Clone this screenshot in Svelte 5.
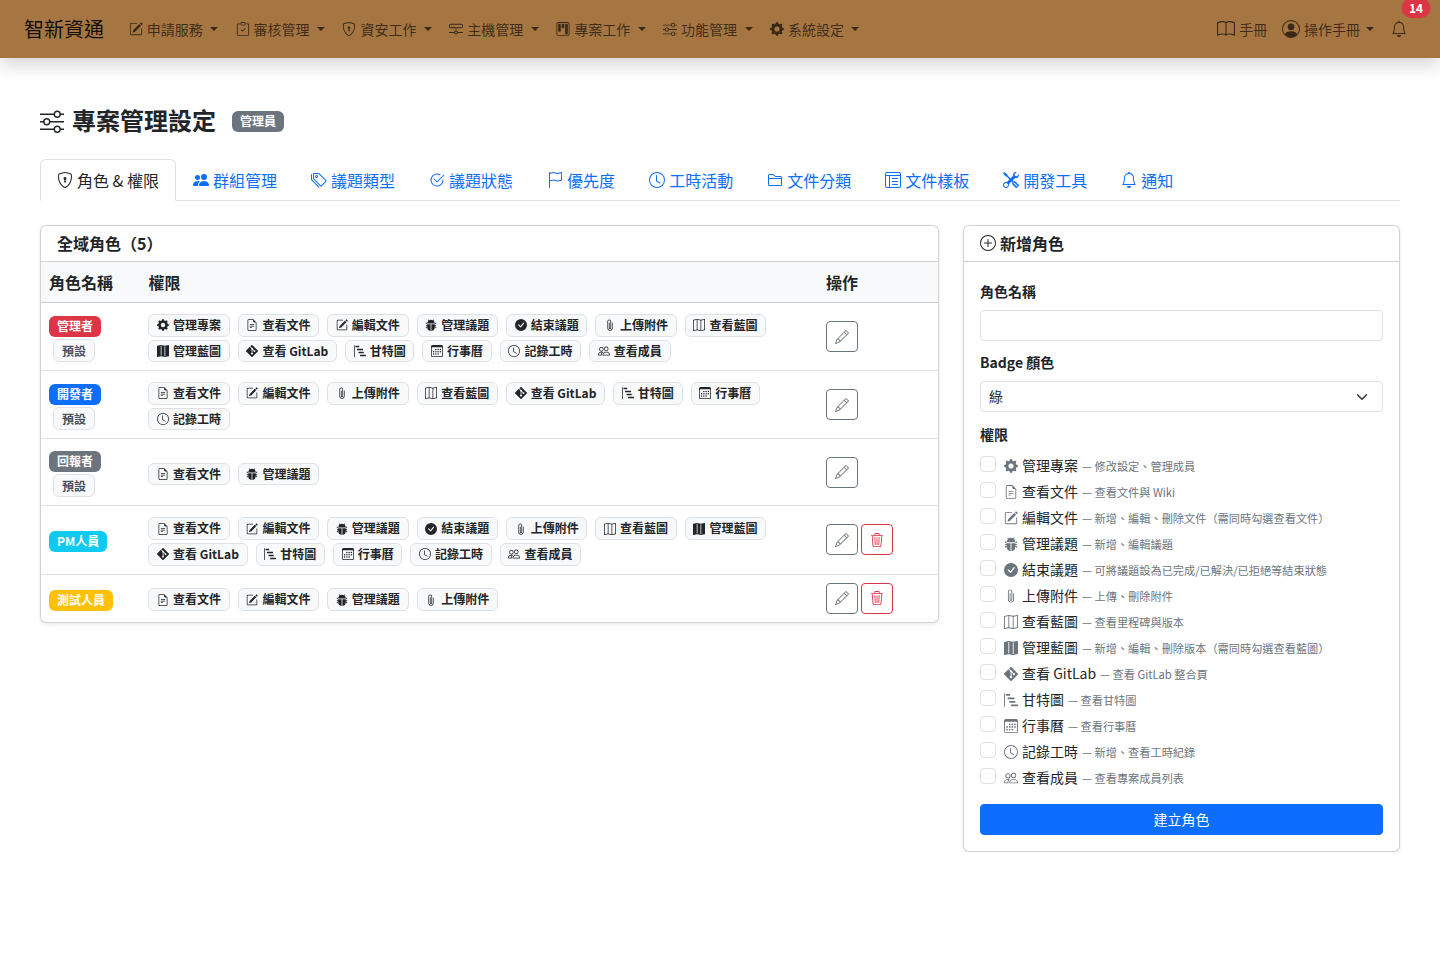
<script>
  const icons = {
    editsq: '<path d="M15.502 1.94a.5.5 0 0 1 0 .706L14.459 3.69l-2-2L13.502.646a.5.5 0 0 1 .707 0l1.293 1.293zm-1.75 2.456-2-2L4.939 9.21a.5.5 0 0 0-.121.196l-.805 2.414a.25.25 0 0 0 .316.316l2.414-.805a.5.5 0 0 0 .196-.12l6.813-6.814z"/><path fill-rule="evenodd" d="M1 13.5A1.5 1.5 0 0 0 2.5 15h11a1.5 1.5 0 0 0 1.5-1.5v-6a.5.5 0 0 0-1 0v6a.5.5 0 0 1-.5.5h-11a.5.5 0 0 1-.5-.5v-11a.5.5 0 0 1 .5-.5H9a.5.5 0 0 0 0-1H2.5A1.5 1.5 0 0 0 1 2.5v11z"/>',
    clip: '<path fill-rule="evenodd" d="M10.854 7.146a.5.5 0 0 1 0 .708l-3 3a.5.5 0 0 1-.708 0l-1.5-1.5a.5.5 0 1 1 .708-.708L7.5 9.793l2.646-2.647a.5.5 0 0 1 .708 0z"/><path d="M4 1.5H3a2 2 0 0 0-2 2V14a2 2 0 0 0 2 2h10a2 2 0 0 0 2-2V3.5a2 2 0 0 0-2-2h-1v1h1a1 1 0 0 1 1 1V14a1 1 0 0 1-1 1H3a1 1 0 0 1-1-1V3.5a1 1 0 0 1 1-1h1v-1z"/><path d="M9.5 1a.5.5 0 0 1 .5.5v1a.5.5 0 0 1-.5.5h-3a.5.5 0 0 1-.5-.5v-1a.5.5 0 0 1 .5-.5h3zm-3-1A1.5 1.5 0 0 0 5 1.5v1A1.5 1.5 0 0 0 6.5 4h3A1.5 1.5 0 0 0 11 2.5v-1A1.5 1.5 0 0 0 9.5 0h-3z"/>',
    shield: '<path d="M5.338 1.59a61.44 61.44 0 0 0-2.837.856.481.481 0 0 0-.328.39c-.554 4.157.726 7.19 2.253 9.188a10.725 10.725 0 0 0 2.287 2.233c.346.244.652.42.893.533.12.057.218.095.293.118a.55.55 0 0 0 .101.025.615.615 0 0 0 .1-.025c.076-.023.174-.061.294-.118.24-.113.547-.29.893-.533a10.726 10.726 0 0 0 2.287-2.233c1.527-1.997 2.807-5.031 2.253-9.188a.48.48 0 0 0-.328-.39c-.651-.213-1.75-.56-2.837-.855C9.552 1.29 8.531 1.067 8 1.067c-.53 0-1.552.223-2.662.524zM5.072.56C6.157.265 7.31 0 8 0s1.843.265 2.928.56c1.11.3 2.229.655 2.887.87a1.54 1.54 0 0 1 1.044 1.262c.596 4.477-.787 7.795-2.465 9.99a11.775 11.775 0 0 1-2.517 2.453 7.159 7.159 0 0 1-1.048.625c-.28.132-.581.24-.829.24s-.548-.108-.829-.24a7.158 7.158 0 0 1-1.048-.625 11.777 11.777 0 0 1-2.517-2.453C1.928 10.487.545 7.169 1.141 2.692A1.54 1.54 0 0 1 2.185 1.43 62.456 62.456 0 0 1 5.072.56z"/><path d="M9.5 6.5a1.5 1.5 0 0 1-1 1.415l.385 1.99a.5.5 0 0 1-.491.595h-.788a.5.5 0 0 1-.49-.595l.384-1.99a1.5 1.5 0 1 1 2-1.415z"/>',
    hdd: '<path d="M4.5 5a.5.5 0 1 0 0-1 .5.5 0 0 0 0 1zM3 4.5a.5.5 0 1 1-1 0 .5.5 0 0 1 1 0z"/><path d="M0 4a2 2 0 0 1 2-2h12a2 2 0 0 1 2 2v1a2 2 0 0 1-2 2H8.5v3a1.5 1.5 0 0 1 1.5 1.5h5.5a.5.5 0 0 1 0 1H10A1.5 1.5 0 0 1 8.5 14h-1A1.5 1.5 0 0 1 6 12.5H.5a.5.5 0 0 1 0-1H6A1.5 1.5 0 0 1 7.5 10V7H2a2 2 0 0 1-2-2V4zm1 0v1a1 1 0 0 0 1 1h12a1 1 0 0 0 1-1V4a1 1 0 0 0-1-1H2a1 1 0 0 0-1 1zm6 7.5v1a.5.5 0 0 0 .5.5h1a.5.5 0 0 0 .5-.5v-1a.5.5 0 0 0-.5-.5h-1a.5.5 0 0 0-.5.5z"/>',
    kanban: '<path d="M13.5 1a1 1 0 0 1 1 1v12a1 1 0 0 1-1 1h-11a1 1 0 0 1-1-1V2a1 1 0 0 1 1-1h11zm-11-1a2 2 0 0 0-2 2v12a2 2 0 0 0 2 2h11a2 2 0 0 0 2-2V2a2 2 0 0 0-2-2h-11z"/><path d="M6.5 3a1 1 0 0 1 1-1h1a1 1 0 0 1 1 1v3a1 1 0 0 1-1 1h-1a1 1 0 0 1-1-1V3zm-4 0a1 1 0 0 1 1-1h1a1 1 0 0 1 1 1v7a1 1 0 0 1-1 1h-1a1 1 0 0 1-1-1V3zm8 0a1 1 0 0 1 1-1h1a1 1 0 0 1 1 1v10a1 1 0 0 1-1 1h-1a1 1 0 0 1-1-1V3z"/>',
    sliders: '<path fill-rule="evenodd" d="M11.5 2a1.5 1.5 0 1 0 0 3 1.5 1.5 0 0 0 0-3zM9.05 3a2.5 2.5 0 0 1 4.9 0H16v1h-2.05a2.5 2.5 0 0 1-4.9 0H0V3h9.05zM4.5 7a1.5 1.5 0 1 0 0 3 1.5 1.5 0 0 0 0-3zM2.05 8a2.5 2.5 0 0 1 4.9 0H16v1H6.95a2.5 2.5 0 0 1-4.9 0H0V8h2.05zm9.45 4a1.5 1.5 0 1 0 0 3 1.5 1.5 0 0 0 0-3zm-2.45 1a2.5 2.5 0 0 1 4.9 0H16v1h-2.05a2.5 2.5 0 0 1-4.9 0H0v-1h9.05z"/>',
    gear: '<path d="M9.405 1.05c-.413-1.4-2.397-1.4-2.81 0l-.1.34a1.464 1.464 0 0 1-2.105.872l-.31-.17c-1.283-.698-2.686.705-1.987 1.987l.169.311c.446.82.023 1.841-.872 2.105l-.34.1c-1.4.413-1.4 2.397 0 2.81l.34.1a1.464 1.464 0 0 1 .872 2.105l-.17.31c-.698 1.283.705 2.686 1.987 1.987l.311-.169a1.464 1.464 0 0 1 2.105.872l.1.34c.413 1.4 2.397 1.4 2.81 0l.1-.34a1.464 1.464 0 0 1 2.105-.872l.31.17c1.283.698 2.686-.705 1.987-1.987l-.169-.311a1.464 1.464 0 0 1 .872-2.105l.34-.1c1.4-.413 1.4-2.397 0-2.81l-.34-.1a1.464 1.464 0 0 1-.872-2.105l.17-.31c.698-1.283-.705-2.686-1.987-1.987l-.311.169a1.464 1.464 0 0 1-2.105-.872l-.1-.34zM8 10.93a2.929 2.929 0 1 1 0-5.86 2.929 2.929 0 0 1 0 5.858z"/>',
    book: '<path d="M1 2.828c.885-.37 2.154-.769 3.388-.893 1.33-.134 2.458.063 3.112.752v9.746c-.935-.53-2.12-.603-3.213-.493-1.18.12-2.37.461-3.287.811V2.828zm7.5-.141c.654-.689 1.782-.886 3.112-.752 1.234.124 2.503.523 3.388.893v9.923c-.918-.35-2.107-.692-3.287-.81-1.094-.111-2.278-.039-3.213.492V2.687zM8 1.783C7.015.936 5.587.81 4.287.94c-1.514.153-3.042.672-3.994 1.105A.5.5 0 0 0 0 2.5v11a.5.5 0 0 0 .707.455c.882-.4 2.303-.881 3.68-1.02 1.409-.142 2.59.087 3.223.877a.5.5 0 0 0 .78 0c.633-.79 1.814-1.019 3.222-.877 1.378.139 2.8.62 3.681 1.02A.5.5 0 0 0 16 13.5v-11a.5.5 0 0 0-.293-.455c-.952-.433-2.48-.952-3.994-1.105C10.413.809 8.985.936 8 1.783z"/>',
    person: '<path d="M11 6a3 3 0 1 1-6 0 3 3 0 0 1 6 0z"/><path fill-rule="evenodd" d="M0 8a8 8 0 1 1 16 0A8 8 0 0 1 0 8zm8-7a7 7 0 0 0-5.468 11.37C3.242 11.226 4.805 10 8 10s4.757 1.225 5.468 2.37A7 7 0 0 0 8 1z"/>',
    bell: '<path d="M8 16a2 2 0 0 0 2-2H6a2 2 0 0 0 2 2zM8 1.918l-.797.161A4.002 4.002 0 0 0 4 6c0 .628-.134 2.197-.459 3.742-.16.767-.376 1.566-.663 2.258h10.244c-.287-.692-.502-1.49-.663-2.258C12.134 8.197 12 6.628 12 6a4.002 4.002 0 0 0-3.203-3.92L8 1.917zM14.22 12c.223.447.481.801.78 1H1c.299-.199.557-.553.78-1C2.68 10.2 3 6.88 3 6c0-2.42 1.72-4.44 4.005-4.901a1 1 0 1 1 1.99 0A5.002 5.002 0 0 1 13 6c0 .88.32 4.2 1.22 6z"/>',
    peoplefill: '<path d="M7 14s-1 0-1-1 1-4 5-4 5 3 5 4-1 1-1 1H7zm4-6a3 3 0 1 0 0-6 3 3 0 0 0 0 6z"/><path fill-rule="evenodd" d="M5.216 14A2.238 2.238 0 0 1 5 13c0-1.355.68-2.75 1.936-3.72A6.325 6.325 0 0 0 5 9c-4 0-5 3-5 4s1 1 1 1h4.216z"/><path d="M4.5 8a2.5 2.5 0 1 0 0-5 2.5 2.5 0 0 0 0 5z"/>',
    tags: '<path d="M3 2v4.586l7 7L14.586 9l-7-7H3zM2 2a1 1 0 0 1 1-1h4.586a1 1 0 0 1 .707.293l7 7a1 1 0 0 1 0 1.414l-4.586 4.586a1 1 0 0 1-1.414 0l-7-7A1 1 0 0 1 2 6.586V2z"/><path d="M5.5 5a.5.5 0 1 1 0-1 .5.5 0 0 1 0 1zm0 1a1.5 1.5 0 1 0 0-3 1.5 1.5 0 0 0 0 3zM1 7.086a1 1 0 0 0 .293.707L8.75 15.25l-.043.043a1 1 0 0 1-1.414 0l-7-7A1 1 0 0 1 0 7.586V3a1 1 0 0 1 1-1v5.086z"/>',
    check2: '<path d="M2.5 8a5.5 5.5 0 0 1 8.25-4.764.5.5 0 0 0 .5-.866A6.5 6.5 0 1 0 14.5 8a.5.5 0 0 0-1 0 5.5 5.5 0 1 1-11 0z"/><path d="M15.354 3.354a.5.5 0 0 0-.708-.708L8 9.293 5.354 6.646a.5.5 0 1 0-.708.708l3 3a.5.5 0 0 0 .708 0l7-7z"/>',
    flag: '<path d="M14.778.085A.5.5 0 0 1 15 .5V8a.5.5 0 0 1-.314.464L14.5 8l.186.464-.003.001-.006.003-.023.009a12.435 12.435 0 0 1-.397.15c-.264.095-.631.223-1.047.35-.816.252-1.879.523-2.71.523-.847 0-1.548-.28-2.158-.525l-.028-.01C7.68 8.71 7.14 8.5 6.5 8.5c-.7 0-1.638.23-2.437.477A19.626 19.626 0 0 0 3 9.342V15.5a.5.5 0 0 1-1 0V.5a.5.5 0 0 1 1 0v.282c.226-.079.496-.17.79-.26C4.606.272 5.67 0 6.5 0c.84 0 1.524.277 2.121.519l.043.018C9.286.788 9.828 1 10.5 1c.7 0 1.638-.23 2.437-.477a19.587 19.587 0 0 0 1.349-.476l.019-.007.004-.002h.001M14 1.221c-.22.078-.48.167-.766.255-.81.252-1.872.523-2.734.523-.886 0-1.592-.286-2.203-.534l-.008-.003C7.662 1.21 7.139 1 6.5 1c-.669 0-1.606.229-2.415.478A21.294 21.294 0 0 0 3 1.845v6.433c.22-.078.48-.167.766-.255C4.576 7.77 5.638 7.5 6.5 7.5c.847 0 1.548.28 2.158.525l.028.01C9.32 8.29 9.86 8.5 10.5 8.5c.668 0 1.606-.229 2.415-.478A21.317 21.317 0 0 0 14 7.655V1.222z"/>',
    clock: '<path d="M8 3.5a.5.5 0 0 0-1 0V9a.5.5 0 0 0 .252.434l3.5 2a.5.5 0 0 0 .496-.868L8 8.71V3.5z"/><path d="M8 16A8 8 0 1 0 8 0a8 8 0 0 0 0 16zm7-8A7 7 0 1 1 1 8a7 7 0 0 1 14 0z"/>',
    folder: '<path d="M1 3.5A1.5 1.5 0 0 1 2.5 2h2.764c.958 0 1.76.56 2.311 1.184C7.985 3.648 8.48 4 9 4h4.5A1.5 1.5 0 0 1 15 5.5v7a1.5 1.5 0 0 1-1.5 1.5h-11A1.5 1.5 0 0 1 1 12.5v-9zM2.5 3a.5.5 0 0 0-.5.5V6h12v-.5a.5.5 0 0 0-.5-.5H9c-.964 0-1.71-.629-2.174-1.154C6.374 3.334 5.82 3 5.264 3H2.5zM14 7H2v5.5a.5.5 0 0 0 .5.5h11a.5.5 0 0 0 .5-.5V7z"/>',
    layout: '<path d="M13 6.5a.5.5 0 0 0-.5-.5h-5a.5.5 0 0 0 0 1h5a.5.5 0 0 0 .5-.5zm0 3a.5.5 0 0 0-.5-.5h-5a.5.5 0 0 0 0 1h5a.5.5 0 0 0 .5-.5zm-.5 2.5a.5.5 0 0 1 0 1h-5a.5.5 0 0 1 0-1h5z"/><path d="M14 0a2 2 0 0 1 2 2v12a2 2 0 0 1-2 2H2a2 2 0 0 1-2-2V2a2 2 0 0 1 2-2h12zM2 1a1 1 0 0 0-1 1v1h14V2a1 1 0 0 0-1-1H2zM1 4v10a1 1 0 0 0 1 1h2V4H1zm9 0H5v11h9a1 1 0 0 0 1-1V4h-5z"/>',
    tools: '<path d="M1 0 0 1l2.2 3.081a1 1 0 0 0 .815.419h.07a1 1 0 0 1 .708.293l2.675 2.675-2.617 2.654A3.003 3.003 0 0 0 0 13a3 3 0 1 0 5.878-.851l2.654-2.617.968.968-.305.914a1 1 0 0 0 .242 1.023l3.27 3.27a.997.997 0 0 0 1.414 0l1.586-1.586a.997.997 0 0 0 0-1.414l-3.27-3.27a1 1 0 0 0-1.023-.242L10.5 9.5l-.96-.96 2.68-2.643A3.005 3.005 0 0 0 16 3c0-.269-.035-.53-.102-.777l-2.14 2.141L12 4l-.364-1.757L13.777.102a3 3 0 0 0-3.675 3.68L7.462 6.46 4.793 3.793a1 1 0 0 1-.293-.707v-.071a1 1 0 0 0-.419-.814L1 0Zm9.646 10.646a.5.5 0 0 1 .708 0l2.914 2.915a.5.5 0 0 1-.707.707l-2.915-2.914a.5.5 0 0 1 0-.708ZM3 11l.471.242.529.026.287.445.445.287.026.529L5 13l-.242.471-.026.529-.445.287-.287.445-.529.026L3 15l-.471-.242L2 14.732l-.287-.445L1.268 14l-.026-.529L1 13l.242-.471.026-.529.445-.287.287-.445.529-.026L3 11Z"/>',
    file: '<path d="M5.5 7a.5.5 0 0 0 0 1h5a.5.5 0 0 0 0-1h-5zM5 9.5a.5.5 0 0 1 .5-.5h5a.5.5 0 0 1 0 1h-5a.5.5 0 0 1-.5-.5zm0 2a.5.5 0 0 1 .5-.5h2a.5.5 0 0 1 0 1h-2a.5.5 0 0 1-.5-.5z"/><path d="M9.5 0H4a2 2 0 0 0-2 2v12a2 2 0 0 0 2 2h8a2 2 0 0 0 2-2V4.5L9.5 0zm0 1v2A1.5 1.5 0 0 0 11 4.5h2V14a1 1 0 0 1-1 1H4a1 1 0 0 1-1-1V2a1 1 0 0 1 1-1h5.5z"/>',
    bug: '<path d="M4.978.855a.5.5 0 1 0-.956.29l.41 1.352A4.985 4.985 0 0 0 3 6h10a4.985 4.985 0 0 0-1.432-3.503l.41-1.352a.5.5 0 1 0-.956-.29l-.291.956A4.978 4.978 0 0 0 8 1a4.979 4.979 0 0 0-2.731.811l-.29-.956z"/><path d="M13 6v1H8.5v8.975A5 5 0 0 0 13 11h.5a.5.5 0 0 1 .5.5v.5a.5.5 0 1 0 1 0v-.5a1.5 1.5 0 0 0-1.5-1.5H13V9h1.5a.5.5 0 0 0 0-1H13V7h.5A1.5 1.5 0 0 0 15 5.5V5a.5.5 0 0 0-1 0v.5a.5.5 0 0 1-.5.5H13zm-5.5 9.975V7H3V6h-.5a.5.5 0 0 1-.5-.5V5a.5.5 0 0 0-1 0v.5A1.5 1.5 0 0 0 2.5 7H3v1H1.5a.5.5 0 0 0 0 1H3v1h-.5A1.5 1.5 0 0 0 1 11.5v.5a.5.5 0 1 0 1 0v-.5a.5.5 0 0 1 .5-.5H3a5 5 0 0 0 4.5 4.975z"/>',
    checkfill: '<path d="M16 8A8 8 0 1 1 0 8a8 8 0 0 1 16 0zm-3.97-3.03a.75.75 0 0 0-1.08.022L7.477 9.417 5.384 7.323a.75.75 0 0 0-1.06 1.06L6.97 11.03a.75.75 0 0 0 1.079-.02l3.992-4.99a.75.75 0 0 0-.01-1.05z"/>',
    paperclip: '<path d="M4.5 3a2.5 2.5 0 0 1 5 0v9a1.5 1.5 0 0 1-3 0V5a.5.5 0 0 1 1 0v7a.5.5 0 0 0 1 0V3a1.5 1.5 0 1 0-3 0v9a2.5 2.5 0 0 0 5 0V5a.5.5 0 0 1 1 0v7a3.5 3.5 0 1 1-7 0V3z"/>',
    map: '<path fill-rule="evenodd" d="M15.817.113A.5.5 0 0 1 16 .5v14a.5.5 0 0 1-.402.49l-5 1a.502.502 0 0 1-.196 0L5.5 15.01l-4.902.98A.5.5 0 0 1 0 15.5v-14a.5.5 0 0 1 .402-.49l5-1a.5.5 0 0 1 .196 0L10.5.99l4.902-.98a.5.5 0 0 1 .415.103zM10 1.91l-4-.8v12.98l4 .8V1.91zm1 12.98 4-.8V1.11l-4 .8v12.98zm-6-.8V1.11l-4 .8v12.98l4-.8z"/>',
    mapfill: '<path fill-rule="evenodd" d="M16 .5a.5.5 0 0 0-.598-.49L10.5.99 5.598.01a.5.5 0 0 0-.196 0l-5 1A.5.5 0 0 0 0 1.5v14a.5.5 0 0 0 .598.49l4.902-.98 4.902.98a.502.502 0 0 0 .196 0l5-1A.5.5 0 0 0 16 14.5V.5zM5 14.09V1.11l.5-.1.5.1v12.98l-.402-.08a.498.498 0 0 0-.196 0L5 14.09zm5 .8V1.91l.402.08a.5.5 0 0 0 .196 0L11 1.91v12.98l-.5.1-.5-.1z"/>',
    git: '<path d="M15.698 7.287 8.712.302a1.03 1.03 0 0 0-1.457 0l-1.45 1.45 1.84 1.84a1.223 1.223 0 0 1 1.55 1.56l1.773 1.774a1.224 1.224 0 0 1 1.267 2.025 1.226 1.226 0 0 1-2.002-1.334L8.58 5.96v4.4a1.226 1.226 0 1 1-1.008-.036V5.887a1.226 1.226 0 0 1-.666-1.608L5.093 2.465l-4.79 4.79a1.03 1.03 0 0 0 0 1.457l6.986 6.986a1.03 1.03 0 0 0 1.457 0l6.953-6.953a1.031 1.031 0 0 0 0-1.457"/>',
    gantt: '<path d="M.5 0a.5.5 0 0 1 .5.5v15a.5.5 0 0 1-1 0V.5A.5.5 0 0 1 .5 0zM2 1.5a.5.5 0 0 1 .5-.5h4a.5.5 0 0 1 .5.5v1a.5.5 0 0 1-.5.5h-4a.5.5 0 0 1-.5-.5v-1zm2 4a.5.5 0 0 1 .5-.5h7a.5.5 0 0 1 .5.5v1a.5.5 0 0 1-.5.5h-7a.5.5 0 0 1-.5-.5v-1zm2 4a.5.5 0 0 1 .5-.5h6a.5.5 0 0 1 .5.5v1a.5.5 0 0 1-.5.5h-6a.5.5 0 0 1-.5-.5v-1zm2 4a.5.5 0 0 1 .5-.5h7a.5.5 0 0 1 .5.5v1a.5.5 0 0 1-.5.5h-7a.5.5 0 0 1-.5-.5v-1z"/>',
    calendar: '<path d="M14 0H2a2 2 0 0 0-2 2v12a2 2 0 0 0 2 2h12a2 2 0 0 0 2-2V2a2 2 0 0 0-2-2zM1 3.857C1 3.384 1.448 3 2 3h12c.552 0 1 .384 1 .857v10.286c0 .473-.448.857-1 .857H2c-.552 0-1-.384-1-.857V3.857z"/><path d="M6.5 7a1 1 0 1 0 0-2 1 1 0 0 0 0 2zm3 0a1 1 0 1 0 0-2 1 1 0 0 0 0 2zm3 0a1 1 0 1 0 0-2 1 1 0 0 0 0 2zm-9 3a1 1 0 1 0 0-2 1 1 0 0 0 0 2zm3 0a1 1 0 1 0 0-2 1 1 0 0 0 0 2zm3 0a1 1 0 1 0 0-2 1 1 0 0 0 0 2zm3 0a1 1 0 1 0 0-2 1 1 0 0 0 0 2zm-9 3a1 1 0 1 0 0-2 1 1 0 0 0 0 2zm3 0a1 1 0 1 0 0-2 1 1 0 0 0 0 2zm3 0a1 1 0 1 0 0-2 1 1 0 0 0 0 2z"/>',
    people: '<path d="M15 14s1 0 1-1-1-4-5-4-5 3-5 4 1 1 1 1h8Zm-7.978-1A.261.261 0 0 1 7 12.996c.001-.264.167-1.03.76-1.72C8.312 10.629 9.282 10 11 10c1.717 0 2.687.63 3.24 1.276.593.69.758 1.457.76 1.72l-.008.002a.274.274 0 0 1-.014.002H7.022ZM11 7a2 2 0 1 0 0-4 2 2 0 0 0 0 4Zm3-2a3 3 0 1 1-6 0 3 3 0 0 1 6 0ZM6.936 9.28a5.88 5.88 0 0 0-1.23-.247A7.35 7.35 0 0 0 5 9c-4 0-5 3-5 4 0 .667.333 1 1 1h4.216A2.238 2.238 0 0 1 5 13c0-1.01.377-2.042 1.09-2.904.243-.294.526-.569.846-.816ZM4.92 10A5.493 5.493 0 0 0 4 13H1c0-.26.164-1.03.76-1.724.545-.636 1.492-1.256 3.16-1.275ZM1.5 5.5a3 3 0 1 1 6 0 3 3 0 0 1-6 0Zm3-2a2 2 0 1 0 0 4 2 2 0 0 0 0-4Z"/>',
    pencil: '<path d="M12.146.146a.5.5 0 0 1 .708 0l3 3a.5.5 0 0 1 0 .708l-10 10a.5.5 0 0 1-.168.11l-5 2a.5.5 0 0 1-.65-.65l2-5a.5.5 0 0 1 .11-.168l10-10zM11.207 2.5 13.5 4.793 14.793 3.5 12.5 1.207 11.207 2.5zm1.586 3L10.5 3.207 4 9.707V10h.5a.5.5 0 0 1 .5.5v.5h.5a.5.5 0 0 1 .5.5v.5h.293l6.5-6.5zm-9.761 5.175-.106.106-1.528 3.821 3.821-1.528.106-.106A.5.5 0 0 1 5 12.5V12h-.5a.5.5 0 0 1-.5-.5V11h-.5a.5.5 0 0 1-.468-.325z"/>',
    trash: '<path d="M6.5 1h3a.5.5 0 0 1 .5.5v1H6v-1a.5.5 0 0 1 .5-.5ZM11 2.5v-1A1.5 1.5 0 0 0 9.5 0h-3A1.5 1.5 0 0 0 5 1.5v1H2.506a.58.58 0 0 0-.01 0H1.5a.5.5 0 0 0 0 1h.538l.853 10.66A2 2 0 0 0 4.885 16h6.23a2 2 0 0 0 1.994-1.84l.853-10.66h.538a.5.5 0 0 0 0-1h-.995a.59.59 0 0 0-.01 0H11Zm1.958 1-.846 10.58a1 1 0 0 1-.997.92h-6.23a1 1 0 0 1-.997-.92L3.042 3.5h9.916Zm-7.487 1a.5.5 0 0 1 .528.47l.5 8.5a.5.5 0 0 1-.998.06L5 5.03a.5.5 0 0 1 .47-.53Zm5.058 0a.5.5 0 0 1 .47.53l-.5 8.5a.5.5 0 1 1-.998-.06l.5-8.5a.5.5 0 0 1 .528-.47ZM8 4.5a.5.5 0 0 1 .5.5v8.5a.5.5 0 0 1-1 0V5a.5.5 0 0 1 .5-.5Z"/>',
    plus: '<path d="M8 15A7 7 0 1 1 8 1a7 7 0 0 1 0 14zm0 1A8 8 0 1 0 8 0a8 8 0 0 0 0 16z"/><path d="M8 4a.5.5 0 0 1 .5.5v3h3a.5.5 0 0 1 0 1h-3v3a.5.5 0 0 1-1 0v-3h-3a.5.5 0 0 1 0-1h3v-3A.5.5 0 0 1 8 4z"/>'
  }

  const navItems = [
    ['editsq', '申請服務'], ['clip', '審核管理'], ['shield', '資安工作'], ['hdd', '主機管理'],
    ['kanban', '專案工作'], ['sliders', '功能管理'], ['gear', '系統設定']
  ]

  const tabs = [
    ['shield', '角色 & 權限'], ['peoplefill', '群組管理'], ['tags', '議題類型'], ['check2', '議題狀態'],
    ['flag', '優先度'], ['clock', '工時活動'], ['folder', '文件分類'], ['layout', '文件樣板'],
    ['tools', '開發工具'], ['bell', '通知']
  ]

  const perms = {
    manage: ['gear', '管理專案', '修改設定、管理成員'],
    view: ['file', '查看文件', '查看文件與 Wiki'],
    edit: ['editsq', '編輯文件', '新增、編輯、刪除文件（需同時勾選查看文件）'],
    issue: ['bug', '管理議題', '新增、編輯議題'],
    close: ['checkfill', '結束議題', '可將議題設為已完成/已解決/已拒絕等結束狀態'],
    upload: ['paperclip', '上傳附件', '上傳、刪除附件'],
    road: ['map', '查看藍圖', '查看里程碑與版本'],
    roadm: ['mapfill', '管理藍圖', '新增、編輯、刪除版本（需同時勾選查看藍圖）'],
    git: ['git', '查看 GitLab', '查看 GitLab 整合頁'],
    gantt: ['gantt', '甘特圖', '查看甘特圖'],
    cal: ['calendar', '行事曆', '查看行事曆'],
    time: ['clock', '記錄工時', '新增、查看工時紀錄'],
    member: ['people', '查看成員', '查看專案成員列表']
  }

  const roles = [
    { name: '管理者', color: 'red', preset: true, del: false,
      perms: ['manage', 'view', 'edit', 'issue', 'close', 'upload', 'road', 'roadm', 'git', 'gantt', 'cal', 'time', 'member'] },
    { name: '開發者', color: 'blue', preset: true, del: false,
      perms: ['view', 'edit', 'upload', 'road', 'git', 'gantt', 'cal', 'time'] },
    { name: '回報者', color: 'gray', preset: true, del: false, perms: ['view', 'issue'] },
    { name: 'PM人員', color: 'cyan', preset: false, del: true,
      perms: ['view', 'edit', 'issue', 'close', 'upload', 'road', 'roadm', 'git', 'gantt', 'cal', 'time', 'member'] },
    { name: '測試人員', color: 'yellow', preset: false, del: true, perms: ['view', 'edit', 'issue', 'upload'] }
  ]
</script>

{#snippet icon(name, cls = '')}
  <svg class="bi {cls}" viewBox="0 0 16 16" fill="currentColor" aria-hidden="true">{@html icons[name]}</svg>
{/snippet}

<nav class="navbar">
  <span class="brand">智新資通</span>
  <ul class="nav-list">
    {#each navItems as [ic, label]}
      <li class="nav-link">{@render icon(ic)}<span>{label}</span><i class="caret"></i></li>
    {/each}
  </ul>
  <ul class="nav-list right">
    <li class="nav-link book">{@render icon('book', 'lg')}<span>手冊</span></li>
    <li class="nav-link">{@render icon('person', 'lg')}<span>操作手冊</span><i class="caret"></i></li>
    <li class="nav-link bell">
      {@render icon('bell', 'bell-ic')}
      <span class="count">14</span>
    </li>
  </ul>
</nav>

<main>
  <div class="page-title">
    {@render icon('sliders', 'title-ic')}
    <h1>專案管理設定</h1>
    <span class="badge gray">管理員</span>
  </div>

  <ul class="tabs">
    {#each tabs as [ic, label], i}
      <li class="tab" class:active={i === 0}>{@render icon(ic, 'tab-ic')}<span>{label}</span></li>
    {/each}
  </ul>

  <div class="columns">
    <section class="card">
      <header class="card-header">全域角色（5）</header>
      <table>
        <colgroup>
          <col class="c-name" />
          <col />
          <col class="c-act" />
        </colgroup>
        <thead>
          <tr><th>角色名稱</th><th>權限</th><th>操作</th></tr>
        </thead>
        <tbody>
          {#each roles as role}
            <tr>
              <td>
                <div class="name-cell">
                  <span class="badge {role.color}">{role.name}</span>
                  {#if role.preset}<span class="preset">預設</span>{/if}
                </div>
              </td>
              <td>
                <div class="chips">
                  {#each role.perms as key}
                    <span class="chip">{@render icon(perms[key][0], 'chip-ic')}{perms[key][1]}</span>
                  {/each}
                </div>
              </td>
              <td>
                <div class="actions">
                  <button class="btn-icon edit" aria-label="編輯">{@render icon('pencil')}</button>
                  {#if role.del}
                    <button class="btn-icon del" aria-label="刪除">{@render icon('trash')}</button>
                  {/if}
                </div>
              </td>
            </tr>
          {/each}
        </tbody>
      </table>
    </section>

    <section class="card side">
      <header class="card-header with-icon">{@render icon('plus', 'tab-ic')}新增角色</header>
      <form class="form">
        <label class="label" for="role-name">角色名稱</label>
        <input id="role-name" class="control" type="text" />
        <label class="label second" for="role-color">Badge 顏色</label>
        <div class="select-wrap">
          <select id="role-color" class="control">
            <option>綠</option>
          </select>
          <svg class="chevron" viewBox="0 0 16 16" fill="none" stroke="#343a40" stroke-linecap="round" stroke-linejoin="round" stroke-width="2" aria-hidden="true"><path d="m2 5 6 6 6-6"/></svg>
        </div>
        <div class="label third">權限</div>
        <div class="perm-list">
          {#each Object.values(perms) as [ic, label, desc]}
            <label class="perm">
              <input type="checkbox" />
              {@render icon(ic, 'perm-ic')}
              <span class="perm-name">{label}</span>
              <span class="perm-desc">— {desc}</span>
            </label>
          {/each}
        </div>
        <button type="button" class="submit">建立角色</button>
      </form>
    </section>
  </div>
</main>

<style>
  :global(body) {
    margin: 0;
    background: #fff;
    color: #212529;
    font-family: "Noto Sans CJK TC", "Noto Sans", sans-serif;
    font-size: 16px;
    line-height: 1.5;
  }

  ul {
    list-style: none;
    margin: 0;
    padding: 0;
  }

  .bi {
    width: 14px;
    height: 14px;
    flex: none;
    display: block;
  }

  .navbar {
    height: 58px;
    box-sizing: border-box;
    padding: 0 24px;
    display: flex;
    align-items: center;
    background: #a67642;
    box-shadow: 0 8px 16px rgba(0, 0, 0, 0.15);
    color: rgba(0, 0, 0, 0.65);
    font-size: 14px;
  }

  .brand {
    font-size: 20px;
    color: rgba(0, 0, 0, 0.9);
    margin-right: 16px;
  }

  .nav-list {
    display: flex;
    align-items: center;
  }

  .nav-list.right {
    margin-left: auto;
  }

  .nav-link {
    display: flex;
    align-items: center;
    gap: 4px;
    padding: 8px 8.7px;
    height: 42px;
    box-sizing: border-box;
    position: relative;
    white-space: nowrap;
  }

  .nav-link .bi.lg {
    width: 18px;
    height: 18px;
  }

  .nav-link.book {
    padding-right: 6px;
  }

  .right .caret {
    margin-left: 2px;
  }

  .bell-ic.bi {
    width: 16px;
    height: 16px;
    margin-top: -1px;
  }

  .caret {
    width: 0;
    height: 0;
    margin-left: 3.5px;
    border-top: 4.2px solid;
    border-left: 4.2px solid transparent;
    border-right: 4.2px solid transparent;
  }

  .count {
    position: absolute;
    left: 100%;
    top: 0;
    transform: translate(-50%, -50%);
    padding: 0 7.5px;
    background: #dc3545;
    color: #fff;
    border-radius: 10px;
    font-size: 12px;
    font-weight: 700;
    line-height: 20px;
  }

  main {
    padding: 48px 40px 0;
  }

  .page-title {
    display: flex;
    align-items: center;
    height: 30px;
    margin-bottom: 23px;
  }

  .title-ic.bi {
    width: 24px;
    height: 24px;
    margin-right: 8px;
  }

  h1 {
    margin: 0 16px 0 0;
    padding-bottom: 2px;
    font-size: 24px;
    line-height: 28px;
    font-weight: 700;
  }

  .badge {
    display: inline-block;
    padding: 0 8px 1px;
    border-radius: 6px;
    color: #fff;
    font-size: 12px;
    font-weight: 700;
    line-height: 20px;
    white-space: nowrap;
  }

  .red { background: #dc3545; }
  .blue { background: #0d6efd; }
  .gray { background: #6c757d; }
  .cyan { background: #0dcaf0; }
  .yellow { background: #ffc107; }

  .tabs {
    display: flex;
    border-bottom: 1px solid #dee2e6;
    margin-bottom: 24px;
  }

  .tab {
    display: flex;
    align-items: center;
    gap: 4px;
    box-sizing: border-box;
    padding: 0 17px;
    color: #0d6efd;
    border-radius: 6px 6px 0 0;
    margin-bottom: -1px;
    height: 42px;
  }

  .tab.active {
    color: #212529;
    background: #fff;
    padding: 0 16px;
    border: 1px solid #dee2e6;
    border-bottom-color: #fff;
  }

  .tab-ic.bi {
    width: 16px;
    height: 16px;
  }

  .columns {
    display: grid;
    grid-template-columns: 899px 437px;
    gap: 24px;
    align-items: start;
  }

  .card {
    border: 1px solid rgba(0, 0, 0, 0.175);
    border-radius: 6px;
    background: #fff;
    box-shadow: 0 2px 4px rgba(0, 0, 0, 0.075);
    overflow: hidden;
  }

  .card-header {
    padding: 5px 16px 6px;
    font-weight: 700;
    font-size: 16px;
    line-height: 24px;
    border-bottom: 1px solid rgba(0, 0, 0, 0.175);
  }

  .card-header.with-icon {
    display: flex;
    align-items: center;
    gap: 4px;
  }

  table {
    width: 100%;
    border-collapse: collapse;
    table-layout: fixed;
  }

  .c-name { width: 99.4px; }
  .c-act { width: 120px; }

  th {
    padding: 8px;
    text-align: left;
    font-weight: 700;
    font-size: 16px;
    line-height: 24px;
    background: #f8f9fa;
    border-bottom: 1px solid #c9cccf;
  }

  td {
    padding: 8px;
    vertical-align: middle;
    border-bottom: 1px solid #dee2e6;
  }

  tr:last-child td {
    border-bottom: none;
  }

  .name-cell {
    padding-top: 4px;
    display: flex;
    flex-direction: column;
    align-items: flex-start;
    gap: 2px;
  }

  .preset {
    margin-left: 4px;
    padding: 0 8px;
    border: 1px solid #dee2e6;
    border-radius: 6px;
    background: #f8f9fa;
    color: #495057;
    font-size: 12px;
    font-weight: 700;
    line-height: 21px;
  }

  .chips {
    display: flex;
    flex-wrap: wrap;
    gap: 3px 8px;
    padding-top: 3px;
  }

  .chip {
    display: flex;
    align-items: center;
    gap: 4px;
    padding: 0 7.7px;
    border: 1px solid #dee2e6;
    border-radius: 6px;
    background: #f8f9fa;
    font-size: 12px;
    font-weight: 700;
    line-height: 20.6px;
    white-space: nowrap;
  }

  .chip-ic.bi {
    width: 12px;
    height: 12px;
  }

  .actions {
    display: flex;
    gap: 3px;
  }

  .btn-icon {
    width: 32px;
    height: 31px;
    padding: 0;
    display: flex;
    align-items: center;
    justify-content: center;
    background: #fff;
    border-radius: 4px;
    border: 1px solid #6c757d;
    color: #6c757d;
  }

  .btn-icon.del {
    border-color: #dc3545;
    color: #dc3545;
  }

  .form {
    padding: 19px 16px 16px;
    display: flex;
    flex-direction: column;
  }

  .label {
    display: block;
    font-size: 14px;
    font-weight: 700;
    line-height: 21px;
    margin-bottom: 8px;
  }

  .label.second {
    margin-top: 11px;
  }

  .label.third {
    margin-top: 12px;
    margin-bottom: 10.5px;
  }

  .control {
    display: block;
    width: 100%;
    height: 31px;
    box-sizing: border-box;
    padding: 0 8px;
    border: 1px solid #dee2e6;
    border-radius: 4px;
    background: #fff;
    color: #212529;
    font: inherit;
    font-size: 14px;
    appearance: none;
  }

  .select-wrap {
    position: relative;
  }

  .chevron {
    position: absolute;
    right: 15px;
    top: 10px;
    width: 12px;
    height: 12px;
    pointer-events: none;
  }

  .perm-list {
    display: flex;
    flex-direction: column;
    gap: 5px;
  }

  .perm {
    display: flex;
    align-items: center;
    height: 21px;
    font-size: 14px;
    white-space: nowrap;
  }

  .perm input {
    appearance: none;
    margin: 0 8px 0 0;
    width: 16px;
    height: 16px;
    box-sizing: border-box;
    flex: none;
    border: 1px solid #dee2e6;
    border-radius: 4px;
    background: #fff;
    position: relative;
    top: -2.5px;
  }

  .perm-ic.bi {
    margin-right: 4px;
    color: #6c757d;
  }

  .perm-name {
    padding-bottom: 2px;
  }

  .perm-desc {
    margin-left: 4px;
    font-size: 11.2px;
    color: #6c757d;
  }

  .submit {
    margin-top: 15px;
    height: 31px;
    border: 1px solid #0d6efd;
    border-radius: 4px;
    background: #0d6efd;
    color: #fff;
    font: inherit;
    font-size: 14px;
  }
</style>
